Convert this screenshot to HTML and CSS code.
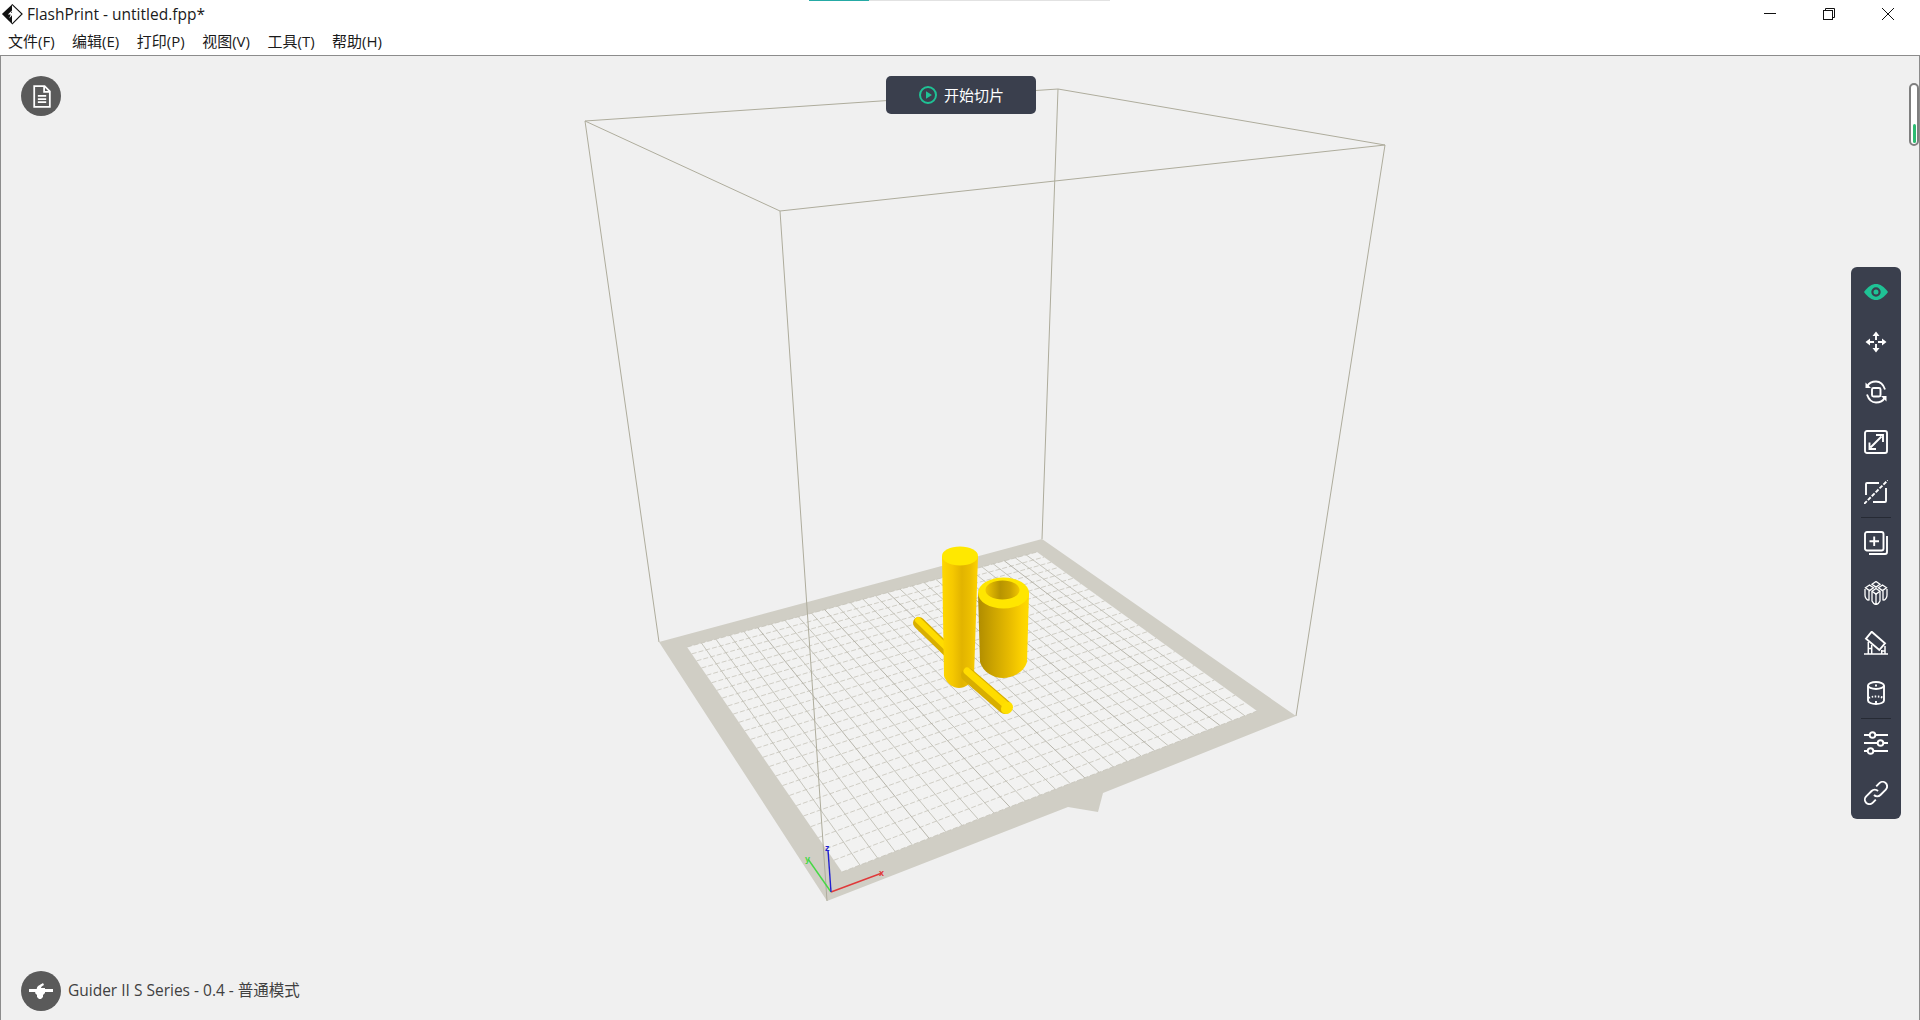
FILE: index.html
```html
<!DOCTYPE html>
<html lang="zh">
<head>
<meta charset="utf-8">
<title>FlashPrint - untitled.fpp*</title>
<link rel="stylesheet" href="styles.css">
</head>
<body>
<svg class="defs" width="0" height="0" aria-hidden="true">
  <defs>
    <linearGradient id="tallGrad" gradientUnits="userSpaceOnUse" x1="942" y1="0" x2="978" y2="0">
      <stop offset="0" stop-color="#ffd800"/><stop offset=".3" stop-color="#f5c800"/><stop offset=".55" stop-color="#e2b400"/><stop offset=".8" stop-color="#edc000"/><stop offset="1" stop-color="#ffd400"/>
    </linearGradient>
    <linearGradient id="shortGrad" gradientUnits="userSpaceOnUse" x1="978" y1="0" x2="1029" y2="0">
      <stop offset="0" stop-color="#b08c00"/><stop offset=".3" stop-color="#cca400"/><stop offset=".6" stop-color="#e6ba00"/><stop offset=".85" stop-color="#fbd000"/><stop offset="1" stop-color="#ffdc00"/>
    </linearGradient>
    <linearGradient id="holeGrad" gradientUnits="userSpaceOnUse" x1="985" y1="0" x2="1019" y2="0">
      <stop offset="0" stop-color="#f2c800"/><stop offset=".45" stop-color="#b89400"/><stop offset=".75" stop-color="#cca400"/><stop offset="1" stop-color="#f0c400"/>
    </linearGradient>
    <symbol id="i-move" viewBox="0 0 24 24"><path d="M12 5v5M12 14v5M5 12h5M14 12h5"/><path d="M8.500 6 12 1.500 15.500 6zM8.500 18 12 22.500 15.500 18zM6 8.500 1.500 12 6 15.500zM18 8.500 22.500 12 18 15.500z" class="sym-fill"/></symbol>
    <symbol id="i-rotate" viewBox="0 0 24 24"><rect x="8" y="8" width="8.500" height="8.500" rx="1.500"/><path d="M21 9.500C19 3.500 15.500 1.500 12 1.500 8 1.500 5 3 3.500 6"/><path d="M3 14.500C5 20.500 8.500 22.500 12 22.500 16 22.500 19 21 20.500 18"/><path d="M1.500 2.500v5.500H7z" class="sym-fill"/><path d="M22.500 21.500V16H17z" class="sym-fill"/></symbol>
    <symbol id="i-scale" viewBox="0 0 24 24"><rect x="1" y="1" width="22" height="22" rx="2"/><path d="M6.500 17.500 17.500 6.500M5.500 12.500v6.500H12M12 5h7v7"/></symbol>
    <symbol id="i-cut" viewBox="0 0 24 24"><path d="M22 8v13a1 1 0 0 1-1 1H9M2 15V4a1 1 0 0 1 1-1h12"/><path d="M0 24 24 0" stroke-dasharray="4 1.500"/></symbol>
    <symbol id="i-add" viewBox="0 0 24 24"><rect x="1" y="1" width="18.500" height="18.500" rx="2"/><path d="M10.200 5.500v9.500M5.500 10.200h9.500M23 5v16a2 2 0 0 1-2 2H5"/></symbol>
    <symbol id="i-multi" viewBox="0 0 24 24"><g class="thin"><path d="M12 .5l4 2.800-4 2.800-4-2.800zM5.500 4l4 2.800-4 2.800-4-2.800zM18.500 4l4 2.800-4 2.800-4-2.800zM12 7.500l4 2.800-4 2.800-4-2.800z"/><path d="M1 8v6c0 2.500 1.500 4.500 3.500 5.500M23 8v6c0 2.500-1.500 4.500-3.500 5.500M5 10v9.500M19 10v9.500M8 11v9c1 2 3 3.500 4 3.500s3-1.500 4-3.500v-9M12 13v10.500"/></g></symbol>
    <symbol id="i-support" viewBox="0 0 24 24"><path d="M7.700.7 21 12.300 15.300 19 2 7.700z"/><path d="M4.300 11v12M7.700 14v9M17.700 19v4M21 15v8M0 23h24M4.300 17.500h3.400M17.700 20h3.300" class="narrow"/></symbol>
    <symbol id="i-cyl" viewBox="0 0 24 24"><ellipse cx="12" cy="4.500" rx="8" ry="3.500"/><path d="M4 4.500v15c0 2 3.500 3.500 8 3.500s8-1.500 8-3.500v-15"/><path d="M5 17c2-2 12-2 14 0" stroke-dasharray="1.500 1.500"/><path d="M12 3.500v2M12 20v2"/></symbol>
    <symbol id="i-sliders" viewBox="0 0 24 24"><path d="M0 4h5.500M12 4h12M0 12h13M19.500 12H24M0 20h3.500M10 20h14"/><circle cx="8.500" cy="4" r="2.800"/><circle cx="16.500" cy="12" r="2.800"/><circle cx="6.500" cy="20" r="2.800"/></symbol>
    <symbol id="i-link" viewBox="0 0 24 24"><path d="M10 14a4.500 4.500 0 0 0 6.400 0l5.400-5.400a4.500 4.500 0 0 0-6.400-6.400l-3.200 3.200"/><path d="M14 10a4.500 4.500 0 0 0-6.400 0l-5.400 5.400a4.500 4.500 0 0 0 6.400 6.400l3.200-3.200"/></symbol>
  </defs>
</svg>

<div class="app">
  <header class="titlebar">
    <div class="title">
      <svg class="logo" viewBox="0 0 24 24" aria-hidden="true">
        <path d="M12 1.500 1 12l11 11z" fill="#111"/>
        <path d="M12 1.500 23 12 12 23" fill="#fff" stroke="#111" stroke-width="1.200"/>
        <path d="M12.500 7.500 7.500 12.500h3l-1.500 4.500 5-6h-3z" fill="#fff"/>
      </svg>
      <span>FlashPrint - untitled.fpp*</span>
    </div>
    <div class="winctl">
      <button class="winbtn" aria-label="最小化"><svg viewBox="0 0 12 12"><path d="M0 5.500h12"/></svg></button>
      <button class="winbtn" aria-label="还原"><svg viewBox="0 0 12 12"><rect x=".5" y="2.500" width="9" height="9"/><path d="M2.500 2.500V.5h9v9H9.500"/></svg></button>
      <button class="winbtn" aria-label="关闭"><svg viewBox="0 0 12 12"><path d="M0 0l12 12M12 0 0 12"/></svg></button>
    </div>
    <div class="progress"><span class="progress-fill"></span></div>
  </header>

  <nav class="menubar">
    <a>文件(F)</a><a>编辑(E)</a><a>打印(P)</a><a>视图(V)</a><a>工具(T)</a><a>帮助(H)</a>
  </nav>

  <main class="canvas">
    <svg class="scene" viewBox="1 56 1918 964" aria-hidden="true">
      <g class="frame">
        <path d="M659 642 585 121M1042 539 1058 89M585 121 1058 89"/>
      </g>
      <path class="bed" d="M659 642 1042 539 1296 716 1103 793 1098 812 1068 807 827 901z"/>
      <path class="plate" d="M687 647 1037 552 1257 711 842 872z"/>
      <g id="grid" class="grid"></g>
      <g class="frame">
        <path d="M1296 716 1385 145M585 121 780 211 1385 145 1058 89M780 211 827 901"/>
      </g>

      <!-- back rod -->
      <path d="M919 623 950 653" class="rod-dark" stroke-width="12"/>
      <path d="M918 620 949 650" class="rod-light" stroke-width="6"/>

      <!-- hollow cylinder -->
      <path d="M978 593 980 662C983 672 993 678 1003 678S1024 672 1027 662L1029 593z" fill="url(#shortGrad)"/>
      <ellipse cx="1003.500" cy="593" rx="25.500" ry="15.500" fill="#ffe600"/>
      <ellipse cx="1002.500" cy="590" rx="17" ry="9.500" fill="url(#holeGrad)"/>
      <!-- tall cylinder -->
      <path d="M942 556 944 676C947 684 953 688 959 688S971 684 974 676L978 556z" fill="url(#tallGrad)"/>
      <ellipse cx="960" cy="556" rx="18" ry="9.500" fill="#ffe800"/>
      <!-- front rod -->
      <path d="M968 675 1005 707" class="rod-dark" stroke-width="14"/>
      <path d="M967 671 1006 705" class="rod-light" stroke-width="7"/>
      <ellipse cx="1007" cy="708" rx="6.500" ry="5.500" transform="rotate(-45 1007 708)" fill="#ffe000"/>

      <!-- axes -->
      <path d="M831 892 882 873" class="axis ax-x"/>
      <path d="M831 892 808 859" class="axis ax-y"/>
      <path d="M831 892 828 850" class="axis ax-z"/>
      <text x="879" y="876" class="ax-label ax-x-t">x</text>
      <text x="805" y="862" class="ax-label ax-y-t">y</text>
      <text x="825" y="851" class="ax-label ax-z-t">z</text>
    </svg>

    <button class="round round-doc" aria-label="文件">
      <svg viewBox="0 0 24 24"><path d="M5 2h10l5 5v15H5z"/><path d="M14.500 2v5.500H20M8.500 11.500h8M8.500 14.500h8M8.500 17.500h8"/></svg>
    </button>

    <button class="slice">
      <svg viewBox="0 0 20 20" aria-hidden="true"><circle cx="10" cy="10" r="8"/><path d="M8 6.200 14 10l-6 3.800z"/></svg>
      <span class="slice-label">开始切片</span>
    </button>

    <div class="scrollmini"><span class="scrollmini-fill"></span></div>

    <aside class="toolbar">
      <div class="tool"><svg class="eye" viewBox="0 0 24 16"><path d="M0 8C4 2.500 8 0 12 0S20 2.500 24 8c-4 5.500-8 8-12 8S4 13.500 0 8z"/><circle cx="12" cy="8" r="3.600"/></svg></div>
      <div class="tool"><svg><use href="#i-move"/></svg></div>
      <div class="tool"><svg><use href="#i-rotate"/></svg></div>
      <div class="tool"><svg><use href="#i-scale"/></svg></div>
      <div class="tool"><svg><use href="#i-cut"/></svg></div>
      <div class="tool sep"><svg><use href="#i-add"/></svg></div>
      <div class="tool"><svg><use href="#i-multi"/></svg></div>
      <div class="tool"><svg><use href="#i-support"/></svg></div>
      <div class="tool"><svg><use href="#i-cyl"/></svg></div>
      <div class="tool sep"><svg><use href="#i-sliders"/></svg></div>
      <div class="tool"><svg><use href="#i-link"/></svg></div>
    </aside>

    <footer class="machine">
      <span class="round round-nozzle">
        <svg viewBox="0 0 30 30"><path d="M3 14.500h24" class="noz-line"/><path d="M11 12c0-2 3-3 6-5l1 2c-2 1-3 2-3 3h4v5l-2 2v2l-2 2h-2l-2-2v-2l-2-2z" class="noz-body"/></svg>
      </span>
      <span class="machine-text">Guider II S Series - 0.4 - 普通模式</span>
    </footer>
  </main>
</div>
<script src="scene.js"></script>
</body>
</html>
```

FILE: styles.css
```css
* { box-sizing: border-box; }
html, body { margin: 0; height: 100%; }
body {
  overflow: hidden;
  background: #fff;
  color: #1a1a1a;
  font-family: "Open Sans", "Noto Sans CJK SC", sans-serif;
}
.defs { position: absolute; }
.app { display: flex; flex-direction: column; height: 1020px; }

.titlebar {
  position: relative;
  display: flex;
  align-items: flex-start;
  justify-content: space-between;
  height: 30px;
  flex: none;
}
.title { display: flex; align-items: center; gap: 4px; padding-left: 1px; font-size: 15.500px; line-height: 28px; }
.logo { width: 22px; height: 22px; flex: none; }
.winctl { display: flex; padding-right: 3px; }
.winbtn {
  width: 59px;
  height: 27px;
  padding: 0;
  border: 0;
  background: none;
  display: flex;
  align-items: center;
  justify-content: center;
}
.winbtn svg { width: 12px; height: 12px; fill: none; stroke: #111; stroke-width: 1; }
.progress { position: absolute; left: 809px; top: 0; width: 301px; height: 1px; background: #e2e2e2; }
.progress-fill { display: block; width: 60px; height: 1px; background: #25aaa5; }

.menubar {
  display: flex;
  gap: 17.500px;
  height: 25px;
  flex: none;
  padding-left: 8px;
  font-size: 15px;
  line-height: 23px;
}

.canvas {
  position: relative;
  flex: 1;
  background: #f0f0f0;
  border: 1px solid #8c8c8c;
  border-bottom: 0;
  overflow: hidden;
}
.scene { position: absolute; left: 0; top: 0; width: 1918px; height: 964px; display: block; }
.frame path { fill: none; stroke: #aeac9c; stroke-width: 1; }
.bed { fill: #d0cec5; }
.plate { fill: #f2f2f1; }
.grid line { stroke: #c0beb4; stroke-width: .9; }
.grid .dash { stroke-dasharray: 5 2; stroke: #c6c4ba; stroke-width: .8; }
.grid .major { stroke: #b0aea3; }
.rod-dark, .rod-light { fill: none; stroke-linecap: round; }
.rod-dark { stroke: #d8ae00; }
.rod-light { stroke: #ffdc00; }
.axis { fill: none; stroke-width: 1.400; }
.ax-x { stroke: #e0393a; }
.ax-y { stroke: #45d845; }
.ax-z { stroke: #2020d0; }
.ax-label { font: 700 9px "Liberation Sans", sans-serif; }
.ax-x-t { fill: #e0393a; }
.ax-y-t { fill: #45d845; }
.ax-z-t { fill: #2020d0; }

.round {
  width: 40px;
  height: 40px;
  padding: 0;
  border: 0;
  border-radius: 50%;
  background: #5a5a5a;
  display: flex;
  align-items: center;
  justify-content: center;
  flex: none;
}
.round-doc { position: absolute; left: 20px; top: 20px; }
.round-doc svg { width: 25px; height: 25px; fill: none; stroke: #fff; stroke-width: 1.700; }

.slice {
  position: absolute;
  left: 885px;
  top: 20px;
  width: 150px;
  height: 38px;
  padding: 0;
  border: 0;
  border-radius: 5px;
  background: #3a3f4d;
  color: #fff;
  font: 15px "Noto Sans CJK SC", sans-serif;
  display: flex;
  align-items: center;
  justify-content: center;
  gap: 6px;
}
.slice svg { width: 20px; height: 20px; }
.slice circle { fill: none; stroke: #1fc295; stroke-width: 2; }
.slice path { fill: #1fc295; }
.slice-label { padding-bottom: 2px; }

.scrollmini {
  position: absolute;
  right: 0;
  top: 27px;
  width: 10px;
  height: 63px;
  background: #fff;
  border: 2px solid #7f7f7f;
  border-radius: 5px;
}
.scrollmini-fill { position: absolute; left: 2px; bottom: 1px; width: 3px; height: 19px; border-radius: 2px; background: #2dbb72; }

.toolbar {
  position: absolute;
  left: 1850px;
  top: 211px;
  width: 50px;
  height: 552px;
  border-radius: 6px;
  background: #3a3f4d;
  display: flex;
  flex-direction: column;
}
.tool { position: relative; height: 50.100px; flex: none; display: flex; align-items: center; justify-content: center; }
.tool svg { width: 24px; height: 24px; fill: none; stroke: #fff; stroke-width: 1.900; overflow: visible; }
.tool svg.eye { height: 16px; stroke: none; }
.eye path { fill: #1fc295; }
.eye circle { fill: #1fc295; stroke: #3a3f4d; stroke-width: 2.200; }
.sym-fill { fill: #fff; stroke: none; }
.thin { stroke-width: 1.300; }
.narrow { stroke-width: 1.500; }
.tool.sep::before {
  content: "";
  position: absolute;
  left: 10px;
  right: 10px;
  top: 0;
  height: 1px;
  background: #262a34;
}

.machine { position: absolute; left: 20px; bottom: 9px; display: flex; align-items: center; gap: 7px; }
.round-nozzle svg { width: 30px; height: 30px; }
.noz-line { stroke: #fff; stroke-width: 3; fill: none; }
.noz-body { fill: #fff; }
.machine-text { font-size: 15.500px; line-height: 36px; padding-bottom: 2px; color: #404040; }
```

FILE: scene.js
```js
// Draws the build plate's grid through a perspective mapping of its four corners.
(function () {
  var front = [842, 872], right = [1257, 711], back = [1037, 552], left = [687, 647];
  var CELLS_X = 28, CELLS_Y = 25;
  var NS = 'http://www.w3.org/2000/svg';

  var dx1 = right[0] - back[0], dx2 = left[0] - back[0], sx = front[0] - right[0] + back[0] - left[0];
  var dy1 = right[1] - back[1], dy2 = left[1] - back[1], sy = front[1] - right[1] + back[1] - left[1];
  var det = dx1 * dy2 - dx2 * dy1;
  var g = (sx * dy2 - dx2 * sy) / det;
  var h = (dx1 * sy - sx * dy1) / det;
  var a = right[0] - front[0] + g * right[0], b = left[0] - front[0] + h * left[0];
  var d = right[1] - front[1] + g * right[1], e = left[1] - front[1] + h * left[1];

  function project(u, v) {
    var w = g * u + h * v + 1;
    return [(a * u + b * v + front[0]) / w, (d * u + e * v + front[1]) / w];
  }

  var host = document.getElementById('grid');
  function addLine(p, q, cls) {
    var el = document.createElementNS(NS, 'line');
    el.setAttribute('x1', p[0]); el.setAttribute('y1', p[1]);
    el.setAttribute('x2', q[0]); el.setAttribute('y2', q[1]);
    if (cls) el.setAttribute('class', cls);
    host.appendChild(el);
  }

  var i;
  for (i = 0; i <= CELLS_Y; i++) {
    addLine(project(0, i / CELLS_Y), project(1, i / CELLS_Y), 'dash');
  }
  for (i = 1; i < CELLS_X; i++) {
    addLine(project(i / CELLS_X, 0), project(i / CELLS_X, 1), i % 5 === 0 ? 'major' : '');
  }
})();
```
